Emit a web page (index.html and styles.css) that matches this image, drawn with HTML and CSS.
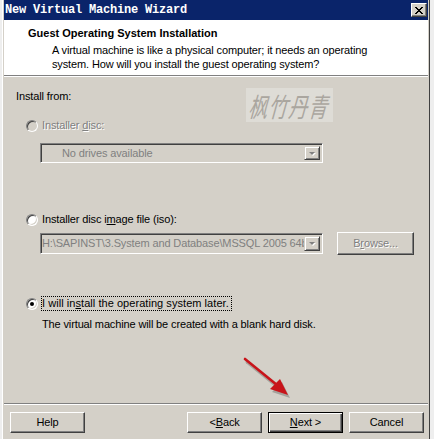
FILE: index.html
```html
<!DOCTYPE html>
<html lang="en">
<head>
    <meta charset="UTF-8">
    <meta name="viewport" content="width=device-width, initial-scale=1.0">
    <title>New Virtual Machine Wizard</title>
    <link rel="stylesheet" href="styles.css">
</head>
<body>
    <div class="window">
        <div class="titlebar">
            <span class="caption">New Virtual Machine Wizard</span>
            <span class="close">
                <svg width="8" height="7" viewBox="0 0 8 7"><path d="M0 0L7 7M1 0L8 7M7 0L0 7M8 0L1 7" stroke="#000" stroke-width="1"/></svg>
            </span>
        </div>

        <div class="header">
            <div class="head-title">Guest Operating System Installation</div>
            <div class="head-desc">A virtual machine is like a physical computer; it needs an operating system. How will you install the guest operating system?</div>
        </div>

        <div class="content">
            <div class="label">Install from:</div>

            <div class="option disabled first">
                <span class="radio"></span>
                <span class="text">Installer <u>d</u>isc:</span>
            </div>
            <div class="combo combo-disc">
                <span class="combo-text">No drives available</span>
                <span class="drop"><i></i></span>
            </div>

            <div class="option second">
                <span class="radio"></span>
                <span class="text">Installer disc i<u>m</u>age file (iso):</span>
            </div>
            <div class="iso-row">
                <div class="combo combo-iso">
                    <span class="combo-text">H:\SAPINST\3.System and Database\MSSQL 2005 64bit</span>
                    <span class="drop"><i></i></span>
                </div>
                <div class="btn browse">B<u>r</u>owse...</div>
            </div>

            <div class="option third">
                <span class="radio checked"></span>
                <span class="text focus">I will in<u>s</u>tall the operating system later.</span>
            </div>
            <div class="note">The virtual machine will be created with a blank hard disk.</div>

            <div class="watermark"><span>枫竹丹青</span></div>

            <svg class="arrow" width="70" height="60" viewBox="0 0 70 60">
                <!-- shadow -->
                <path d="M6 8L38 34" stroke="rgba(0,0,0,0.22)" stroke-width="3" stroke-linecap="round"/>
                <path d="M31 38L41 28L49 44Z" fill="rgba(0,0,0,0.22)"/>
                <path d="M4 5L36 31" stroke="#c8141a" stroke-width="2.6" stroke-linecap="round"/>
                <path d="M29 35L39 25L47 41Z" fill="#c8141a"/>
            </svg>
        </div>

        <div class="footer">
            <div class="btn">Help</div>
            <div class="spacer"></div>
            <div class="btn">&lt; <u>B</u>ack</div>
            <div class="btn default"><u>N</u>ext &gt;</div>
            <div class="btn">Cancel</div>
        </div>
    </div>
</body>
</html>
```

FILE: styles.css
```css
body {
    margin: 0;
    background: #eeeeee;
    font-family: "Liberation Sans", Arial, sans-serif;
    font-size: 11px;
    line-height: 13px;
    letter-spacing: -0.13px;
    color: #000;
    overflow: hidden;
}

.window {
    position: relative;
    margin-left: 2px;
    width: 428px;
    height: 460px;
    box-sizing: border-box;
    border-left: 1px solid #ffffff;
    border-right: 1px solid #404040;
    padding: 0 1px;
    background: #d4d0c8;
}

.titlebar {
    height: 20px;
    background: #0a246a;
    display: flex;
    align-items: center;
    justify-content: space-between;
    padding-left: 1px;
}
.caption {
    font-family: "Liberation Mono", monospace;
    font-weight: bold;
    font-size: 12px;
    letter-spacing: -0.2px;
    color: #fff;
}
.close {
    width: 16px;
    height: 14px;
    box-sizing: border-box;
    margin-right: 1px;
    background: #d4d0c8;
    border: 1px solid;
    border-color: #fff #404040 #404040 #fff;
    box-shadow: inset -1px -1px #808080;
    display: flex;
    align-items: center;
    justify-content: center;
}

.header {
    height: 56px;
    box-sizing: border-box;
    background: #fff;
    border-bottom: 1px solid #808080;
    box-shadow: 0 1px #fff;
    padding: 7px 0 0 24px;
}
.head-title {
    font-weight: bold;
    letter-spacing: 0;
}
.head-desc {
    margin: 4px 40px 0 24px;
    line-height: 13.5px;
}

.content {
    height: 327px;
    box-sizing: border-box;
    padding-left: 12px;
    padding-top: 14px;
}

.option {
    display: flex;
    align-items: center;
    margin-left: 10px;
}
.option.first { margin-top: 16px; }
.option.second { margin-top: 50px; }
.option.third { margin-top: 41px; }
.option .text { margin-left: 4px; }

.disabled .text,
.browse {
    color: #808080;
    text-shadow: 1px 1px #fff;
}

.radio {
    width: 12px;
    height: 12px;
    box-sizing: border-box;
    border-radius: 50%;
    border: 1px solid;
    border-color: #808080 #fff #fff #808080;
    box-shadow: inset 1px 1px #404040, inset -1px -1px #d4d0c8;
    background: #fff;
    position: relative;
}
.disabled .radio { background: #d4d0c8; }
.radio.checked::after {
    content: "";
    position: absolute;
    left: 3px;
    top: 3px;
    width: 4px;
    height: 4px;
    border-radius: 50%;
    background: #000;
}

.focus {
    border: 1px dotted #000;
    padding: 0 2px 0 0;
    letter-spacing: 0.05px;
    margin-left: 3px !important;
}

.combo {
    position: relative;
    height: 20px;
    box-sizing: border-box;
    border: 1px solid;
    border-color: #808080 #fff #fff #808080;
    box-shadow: inset 1px 1px #404040, inset -1px -1px #d4d0c8;
    display: flex;
    align-items: center;
    color: #808080;
    overflow: hidden;
    white-space: nowrap;
}
.combo-disc {
    width: 283px;
    margin: 11px 0 0 24px;
}
.combo-disc .combo-text { padding-left: 21px; }
.combo-iso { width: 283px; height: 21px; }
.combo-iso .combo-text { padding-left: 1px; }

.drop {
    position: absolute;
    right: 2px;
    top: 2px;
    bottom: 2px;
    width: 16px;
    box-sizing: border-box;
    background: #d4d0c8;
    border: 1px solid;
    border-color: #d4d0c8 #404040 #404040 #d4d0c8;
    box-shadow: inset 1px 1px #fff, inset -1px -1px #808080;
    display: flex;
    align-items: center;
    justify-content: center;
}
.drop i {
    width: 0;
    height: 0;
    border-left: 3px solid transparent;
    border-right: 3px solid transparent;
    border-top: 3px solid #808080;
    filter: drop-shadow(1px 1px 0 #fff);
}

.iso-row {
    display: flex;
    align-items: center;
    gap: 14px;
    margin: 6px 0 0 24px;
}

.note {
    margin: 7px 0 0 26px;
}

.btn {
    width: 75px;
    height: 21px;
    box-sizing: border-box;
    border: 1px solid;
    border-color: #fff #404040 #404040 #fff;
    box-shadow: inset -1px -1px #808080;
    display: flex;
    align-items: center;
    justify-content: center;
}
.browse { width: 77px; height: 23px; }
.btn.default {
    border-color: #000;
    box-shadow: inset 1px 1px #fff, inset -1px -1px #404040, inset -2px -2px #808080;
}

.footer {
    border-top: 1px solid #808080;
    box-shadow: inset 0 1px #fff;
    display: flex;
    gap: 6px;
    padding: 8px 4px 0 6px;
}
.spacer { flex: 1; }

.watermark {
    position: absolute;
    left: 243px;
    top: 88px;
    width: 87px;
    height: 34px;
    background: #dedcd6;
    display: flex;
    align-items: center;
    justify-content: center;
}
.watermark span {
    font-family: "Noto Sans CJK SC", sans-serif;
    font-size: 19px;
    line-height: 1;
    letter-spacing: 1px;
    white-space: nowrap;
    font-style: italic;
    color: #aaa69f;
    transform: scaleY(1.4) skewX(-8deg);
}

.arrow {
    position: absolute;
    left: 238px;
    top: 354px;
}
```
